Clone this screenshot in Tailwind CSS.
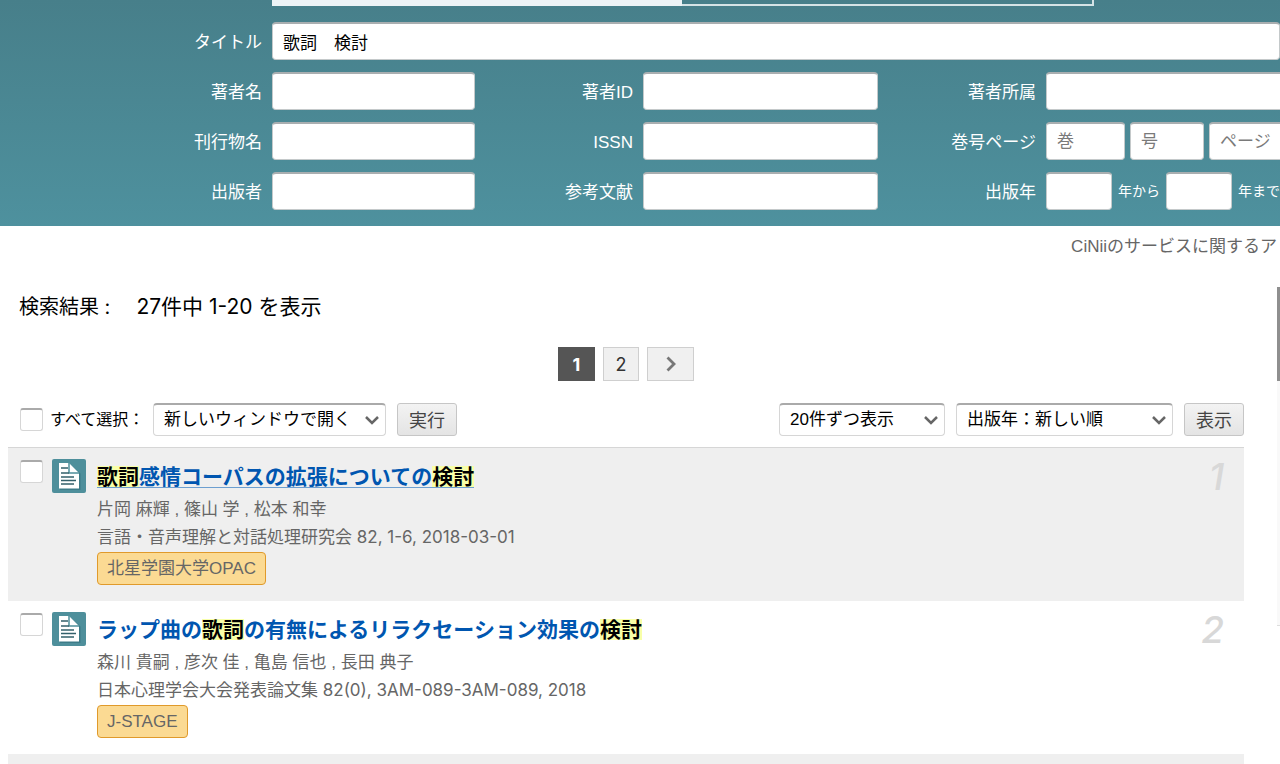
<!DOCTYPE html>
<html lang="ja">
<head>
<meta charset="utf-8">
<meta name="viewport" content="width=device-width, initial-scale=1">
<title>CiNii 検索結果</title>
<script src="https://cdn.jsdelivr.net/npm/@tailwindcss/browser@4"></script>
</head>
<body class="relative bg-white text-black text-[17px] overflow-x-hidden font-['Liberation_Sans','Noto_Sans_CJK_JP',sans-serif]">
<svg class="hidden">
  <symbol id="doc" viewBox="0 0 34 34">
    <rect width="34" height="34" rx="2" fill="#4e8f9b"/>
    <path d="M8 5.500H18L28.500 14.500V31H8Z" fill="#2f6c78" opacity=".55"/>
    <path d="M7 4H17L27 14V29.500H7Z" fill="#fff"/>
    <path d="M17 4V14H27" fill="none" stroke="#4e8f9b" stroke-width="1.500"/>
    <path d="M9 9H16M9 14H17M9 18H22M9 21.500H24M9 25H22" stroke="#33606b" stroke-width="1.400"/>
  </symbol>
  <symbol id="chev" viewBox="0 0 16 10"><path d="M2 2L8 8L14 2" fill="none" stroke="#666" stroke-width="2.500"/></symbol>
</svg>

<header class="bg-linear-to-b from-[#477f8a] to-[#4e919e] pb-4 text-white">
  <div class="ml-[272px] mr-[186px] flex h-[6px]">
    <div class="flex-1 bg-[#edf3f6]"></div>
    <div class="flex-1 border-b-2 border-r-2 border-[#d5e3e6]"></div>
  </div>
  <form class="mt-4 grid grid-cols-[272px_minmax(0,203fr)_168px_minmax(0,235fr)_168px_minmax(0,234fr)] items-center gap-y-3 leading-6">
    <label for="title" class="pr-[10px] pt-[3px] text-right">タイトル</label>
    <input id="title" value="歌詞　検討" class="col-span-5 h-[38px] w-full min-w-0 rounded border border-[#c4c9ca] border-t-2 border-t-[#a9aeb0] bg-white px-[10px] text-black">

    <label for="author" class="pr-[10px] pt-[3px] text-right">著者名</label>
    <input id="author" class="h-[38px] w-full min-w-0 rounded border border-[#c4c9ca] border-t-2 border-t-[#a9aeb0] bg-white px-[10px] text-black">
    <label for="aid" class="pr-[10px] pt-[3px] text-right">著者ID</label>
    <input id="aid" class="h-[38px] w-full min-w-0 rounded border border-[#c4c9ca] border-t-2 border-t-[#a9aeb0] bg-white px-[10px] text-black">
    <label for="aff" class="pr-[10px] pt-[3px] text-right">著者所属</label>
    <input id="aff" class="h-[38px] w-full min-w-0 rounded-l border border-r-0 border-[#c4c9ca] border-t-2 border-t-[#a9aeb0] bg-white px-[10px] text-black">

    <label for="journal" class="pr-[10px] pt-[3px] text-right">刊行物名</label>
    <input id="journal" class="h-[38px] w-full min-w-0 rounded border border-[#c4c9ca] border-t-2 border-t-[#a9aeb0] bg-white px-[10px] text-black">
    <label for="issn" class="pr-[10px] pt-[3px] text-right">ISSN</label>
    <input id="issn" class="h-[38px] w-full min-w-0 rounded border border-[#c4c9ca] border-t-2 border-t-[#a9aeb0] bg-white px-[10px] text-black">
    <label for="vol" class="pr-[10px] pt-[3px] text-right">巻号ページ</label>
    <div class="flex gap-[5px]">
      <input id="vol" placeholder="巻" class="h-[38px] w-[79px] rounded border border-[#c4c9ca] border-t-2 border-t-[#a9aeb0] bg-white px-[10px] text-black placeholder:text-[#7a7a7a]">
      <input aria-label="号" placeholder="号" class="h-[38px] w-[74px] rounded border border-[#c4c9ca] border-t-2 border-t-[#a9aeb0] bg-white px-[10px] text-black placeholder:text-[#7a7a7a]">
      <input aria-label="ページ" placeholder="ページ" class="h-[38px] min-w-0 flex-1 rounded-l border border-r-0 border-[#c4c9ca] border-t-2 border-t-[#a9aeb0] bg-white pl-[10px] text-black placeholder:text-[#7a7a7a]">
    </div>

    <label for="publisher" class="pr-[10px] pt-[3px] text-right">出版者</label>
    <input id="publisher" class="h-[38px] w-full min-w-0 rounded border border-[#c4c9ca] border-t-2 border-t-[#a9aeb0] bg-white px-[10px] text-black">
    <label for="ref" class="pr-[10px] pt-[3px] text-right">参考文献</label>
    <input id="ref" class="h-[38px] w-full min-w-0 rounded border border-[#c4c9ca] border-t-2 border-t-[#a9aeb0] bg-white px-[10px] text-black">
    <label for="from" class="pr-[10px] pt-[3px] text-right">出版年</label>
    <div class="flex items-center gap-[6px] whitespace-nowrap text-sm">
      <input id="from" class="h-[38px] w-[66px] rounded border border-[#c4c9ca] border-t-2 border-t-[#a9aeb0] bg-white px-[10px] text-black">
      <span>年から</span>
      <input aria-label="年まで" class="h-[38px] w-[66px] rounded border border-[#c4c9ca] border-t-2 border-t-[#a9aeb0] bg-white px-[10px] text-black">
      <span>年まで</span>
    </div>
  </form>
</header>

<p class="h-10 pr-[3px] pt-px text-right leading-10 text-[#666]">CiNiiのサービスに関するア</p>

<main class="ml-2 mr-9">
  <h1 class="mt-5 flex h-10 items-baseline gap-[26px] pl-[11px] pt-px font-['Inter','Noto_Sans_CJK_JP',sans-serif] text-xl leading-10"><span>検索結果 :</span><span class="text-[21px]">27件中 1-20 を表示</span></h1>

  <nav class="mt-[21px] flex justify-center gap-2 font-['Inter','Noto_Sans_CJK_JP',sans-serif] text-lg" aria-label="ページ">
    <a href="#" aria-current="page" class="flex h-[34px] w-[37px] items-center justify-center bg-[#555] pt-px font-bold text-white">1</a>
    <a href="#" class="flex h-[34px] w-9 items-center justify-center border border-[#cfcfcf] bg-[#f0f0f0] pt-px text-[#333]">2</a>
    <a href="#" aria-label="次へ" class="flex h-[34px] w-[47px] items-center justify-center border border-[#cfcfcf] bg-[#f0f0f0]"><svg class="h-4 w-[10px]" viewBox="0 0 10 16"><path d="M1.500 1.500L8 8L1.500 14.500" fill="none" stroke="#777" stroke-width="2.800"/></svg></a>
  </nav>

  <form class="mt-[22px] flex h-[33px] items-center">
    <input id="all" type="checkbox" class="ml-3 size-[23px] appearance-none rounded-[3px] border border-[#d6d6d6] border-t-2 border-t-[#aaa] bg-white">
    <label for="all" class="ml-[7px] w-[103px] whitespace-nowrap text-base">すべて選択：</label>
    <div class="relative">
      <select aria-label="操作" class="h-[33px] w-[233px] appearance-none rounded border border-[#d6d6d6] border-t-2 border-t-[#aaa] bg-white pl-[10px]"><option>新しいウィンドウで開く</option></select>
      <svg class="pointer-events-none absolute right-[6px] top-3 h-[10px] w-4"><use href="#chev"/></svg>
    </div>
    <button type="button" class="ml-[11px] h-[33px] w-[60px] rounded-[3px] border border-[#c6c6c6] bg-linear-to-b from-[#f3f3f3] to-[#e4e4e4] pt-[2px] text-lg leading-none text-[#444]">実行</button>
    <div class="relative ml-auto">
      <select aria-label="表示件数" class="h-[33px] w-[166px] appearance-none rounded border border-[#d6d6d6] border-t-2 border-t-[#aaa] bg-white pl-[10px]"><option>20件ずつ表示</option></select>
      <svg class="pointer-events-none absolute right-[6px] top-3 h-[10px] w-4"><use href="#chev"/></svg>
    </div>
    <div class="relative ml-[11px]">
      <select aria-label="並び順" class="h-[33px] w-[217px] appearance-none rounded border border-[#d6d6d6] border-t-2 border-t-[#aaa] bg-white pl-[10px]"><option>出版年：新しい順</option></select>
      <svg class="pointer-events-none absolute right-[6px] top-3 h-[10px] w-4"><use href="#chev"/></svg>
    </div>
    <button type="button" class="ml-[11px] h-[33px] w-[60px] rounded-[3px] border border-[#c6c6c6] bg-linear-to-b from-[#f3f3f3] to-[#e4e4e4] pt-[2px] text-lg leading-none text-[#444]">表示</button>
  </form>

  <ol class="mt-[11px] border-t border-[#d6d6d6]">
    <li class="flex items-start bg-[#efefef] pb-4 pl-3 pr-5 pt-[11px]">
      <input type="checkbox" aria-label="1件目を選択" class="mt-px size-[23px] appearance-none rounded-[3px] border border-[#d6d6d6] border-t-2 border-t-[#aaa] bg-white">
      <svg class="ml-[9px] size-[34px]"><use href="#doc"/></svg>
      <div class="ml-[10px] flex-1 pl-px text-[#666]">
        <h2 class="mb-[2px] flex h-[35px] items-center text-[21px] font-bold"><a href="#" class="border-b border-[#6d9fd0] leading-[21px] text-[#0056b0]"><mark class="inline-block bg-[#f8ffa8] text-black">歌詞</mark>感情コーパスの拡張についての<mark class="inline-block bg-[#f8ffa8] text-black">検討</mark></a></h2>
        <p class="leading-7">片岡 麻輝 , 篠山 学 , 松本 和幸</p>
        <p class="h-7 font-['Inter','Noto_Sans_CJK_JP',sans-serif] leading-[26px]">言語・音声理解と対話処理研究会 82, 1-6, 2018-03-01</p>
        <a href="#" class="inline-flex h-[33px] items-center rounded border border-[#e09a2b] bg-[#fbda93] px-[9px] pt-px">北星学園大学OPAC</a>
      </div>
      <span class="font-['Inter',sans-serif] text-[37px] font-medium italic leading-9 text-[#d8d8d8]">1</span>
    </li>
    <li class="flex items-start pb-4 pl-3 pr-5 pt-[11px]">
      <input type="checkbox" aria-label="2件目を選択" class="mt-px size-[23px] appearance-none rounded-[3px] border border-[#d6d6d6] border-t-2 border-t-[#aaa] bg-white">
      <svg class="ml-[9px] size-[34px]"><use href="#doc"/></svg>
      <div class="ml-[10px] flex-1 pl-px text-[#666]">
        <h2 class="mb-[2px] flex h-[35px] items-center text-[21px] font-bold"><a href="#" class="leading-[21px] text-[#0056b0]">ラップ曲の<mark class="inline-block bg-[#f8ffa8] text-black">歌詞</mark>の有無によるリラクセーション効果の<mark class="inline-block bg-[#f8ffa8] text-black">検討</mark></a></h2>
        <p class="leading-7">森川 貴嗣 , 彦次 佳 , 亀島 信也 , 長田 典子</p>
        <p class="h-7 font-['Inter','Noto_Sans_CJK_JP',sans-serif] leading-[26px]">日本心理学会大会発表論文集 82(0), 3AM-089-3AM-089, 2018</p>
        <a href="#" class="inline-flex h-[33px] items-center rounded border border-[#e09a2b] bg-[#fbda93] px-[9px] pt-px">J-STAGE</a>
      </div>
      <span class="font-['Inter',sans-serif] text-[37px] font-medium italic leading-9 text-[#d8d8d8]">2</span>
    </li>
    <li class="h-[10px] bg-[#efefef]"></li>
  </ol>
</main>

<div class="absolute right-0 top-[287px] h-[339px] w-[3px] border-b border-[#ddd] bg-[#f9f9f9]"><div class="h-[94px] bg-[#8f8f8f]"></div></div>
</body>
</html>
